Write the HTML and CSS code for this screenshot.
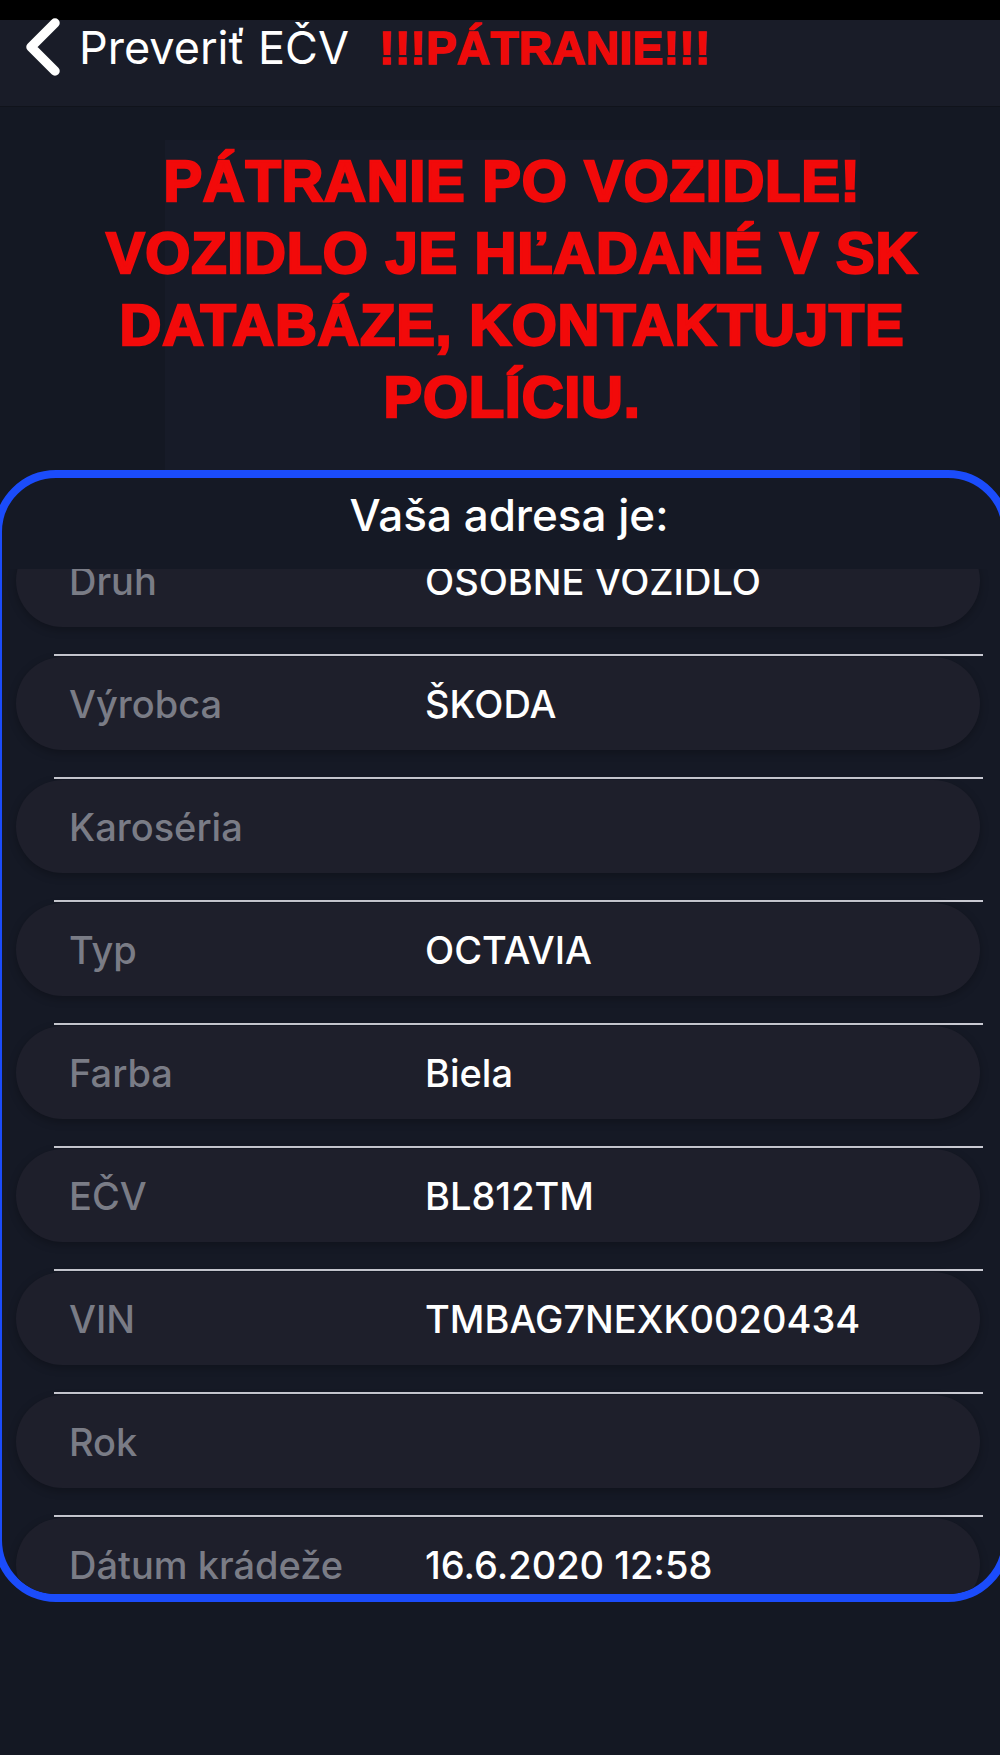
FILE: index.html
```html
<!DOCTYPE html>
<html lang="sk">
<head>
<meta charset="utf-8">
<title>Preveriť EČV</title>
<link rel="stylesheet" href="styles.css">
</head>
<body>
<div class="statusbar"></div>
<header class="navbar">
  <svg class="back" viewBox="0 0 36 58" width="36" height="58" aria-hidden="true">
    <polyline points="30,5 6,29 30,53" fill="none" stroke="#ffffff" stroke-width="9.5" stroke-linecap="round" stroke-linejoin="round"/>
  </svg>
  <div class="nav-titles">
    <span class="nav-title">Preveriť EČV</span>
    <span class="nav-alert">!!!PÁTRANIE!!!</span>
  </div>
</header>
<main class="content">
  <div class="backdrop">
    <h1 class="alert-headline">PÁTRANIE PO VOZIDLE!<br>VOZIDLO JE HĽADANÉ V SK<br>DATABÁZE, KONTAKTUJTE<br>POLÍCIU.</h1>
  </div>
  <section class="card">
    <h2 class="card-title">Vaša adresa je:</h2>
    <div class="list-viewport">
      <ul class="list">
        <li class="row"><div class="pill"><span class="label">Druh</span><span class="value">OSOBNÉ VOZIDLO</span></div></li>
        <li class="row"><div class="pill"><span class="label">Výrobca</span><span class="value">ŠKODA</span></div></li>
        <li class="row"><div class="pill"><span class="label">Karoséria</span><span class="value"></span></div></li>
        <li class="row"><div class="pill"><span class="label">Typ</span><span class="value">OCTAVIA</span></div></li>
        <li class="row"><div class="pill"><span class="label">Farba</span><span class="value">Biela</span></div></li>
        <li class="row"><div class="pill"><span class="label">EČV</span><span class="value">BL812TM</span></div></li>
        <li class="row"><div class="pill"><span class="label">VIN</span><span class="value">TMBAG7NEXK0020434</span></div></li>
        <li class="row"><div class="pill"><span class="label">Rok</span><span class="value"></span></div></li>
        <li class="row"><div class="pill"><span class="label">Dátum krádeže</span><span class="value">16.6.2020 12:58</span></div></li>
      </ul>
    </div>
  </section>
</main>
</body>
</html>
```
FILE: styles.css
```css
html, body {
  margin: 0;
  padding: 0;
}
body {
  width: 1000px;
  height: 1755px;
  overflow: hidden;
  background: #141823;
  font-family: Inter, "Noto Sans", sans-serif;
  color: #ffffff;
}
.statusbar {
  height: 20px;
  background: #000000;
}
.navbar {
  box-sizing: border-box;
  height: 87px;
  background: #191c28;
  border-bottom: 1px solid #10131b;
  display: flex;
  align-items: flex-start;
  padding-left: 25px;
}
.back {
  display: block;
  flex: none;
  margin-top: -2px;
}
.nav-titles {
  display: flex;
  align-items: baseline;
  margin-left: 18px;
  padding-top: 3px;
  gap: 30px;
}
.nav-title {
  font-family: Inter, sans-serif;
  font-size: 45px;
  line-height: 50px;
  font-weight: 400;
  color: #ffffff;
  letter-spacing: 0;
}
.nav-alert {
  font-family: "Liberation Sans", Arial, sans-serif;
  font-weight: 700;
  font-size: 46px;
  line-height: 50px;
  letter-spacing: 0.3px;
  color: #ee0b0b;
  -webkit-text-stroke: 1.5px #ee0b0b;
}
.content {
  display: flex;
  flex-direction: column;
  background-image:
    linear-gradient(#171b28, #171b28),
    linear-gradient(#171b28, #171b28);
  background-repeat: no-repeat;
  background-position: 165px 33px, 165px 1495px;
  background-size: 695px 330px, 695px 50px;
}
.backdrop {
  padding-top: 38px;
  padding-left: 24px;
}
.alert-headline {
  margin: 0;
  text-align: center;
  font-family: "Liberation Sans", Arial, sans-serif;
  font-weight: 700;
  font-size: 58px;
  line-height: 72px;
  letter-spacing: 0.7px;
  color: #f20a0a;
  -webkit-text-stroke: 2.4px #f20a0a;
}
.card {
  box-sizing: border-box;
  margin-top: 37px;
  margin-left: -6px;
  width: 1016px;
  height: 1132px;
  border: 8px solid #1b4cfb;
  border-radius: 62px;
  background: #151925;
  display: flex;
  flex-direction: column;
  overflow: hidden;
}
.card-title {
  margin: 0;
  height: 91px;
  padding-top: 7px;
  padding-left: 14px;
  box-sizing: border-box;
  text-align: center;
  font-family: Inter, sans-serif;
  font-weight: 500;
  font-size: 44px;
  line-height: 60px;
  color: #ffffff;
}
.list-viewport {
  height: 1025px;
  overflow: hidden;
}
.list {
  list-style: none;
  margin: -38px 0 0 0;
  padding: 0;
}
.row {
  height: 123px;
  display: flex;
  flex-direction: column;
}
.row::before {
  content: "";
  display: block;
  height: 2px;
  margin: 0 19px 0 52px;
  background: #c9cad2;
}
.pill {
  height: 93px;
  margin: 1px 22px 0 14px;
  border-radius: 47px;
  background: #1e1f2b;
  box-shadow: 0 3px 8px rgba(0, 0, 0, 0.25);
  display: flex;
  align-items: center;
  padding-left: 53px;
  font-family: Inter, sans-serif;
  font-weight: 500;
  font-size: 38px;
}
.label {
  width: 356px;
  flex: none;
  color: #7a7c86;
}
.value {
  color: #ffffff;
}
```
